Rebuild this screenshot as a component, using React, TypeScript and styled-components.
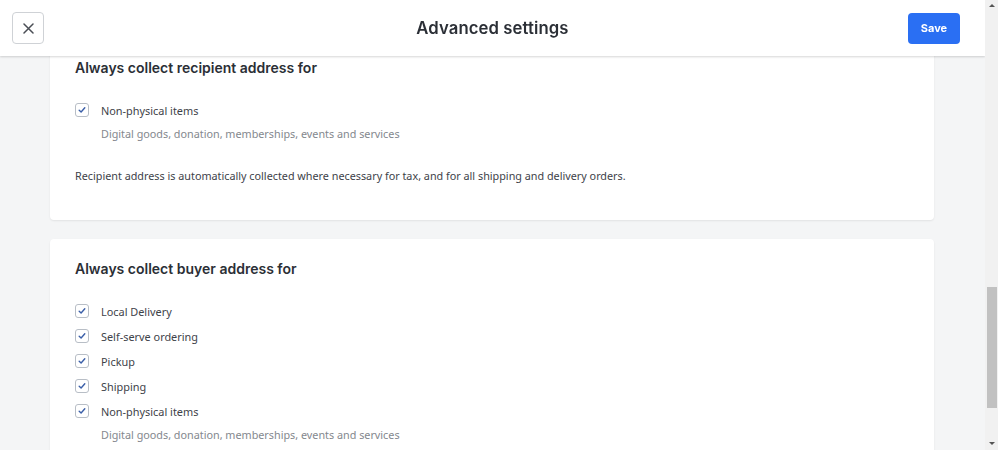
import React, { useLayoutEffect, useRef } from "react";
import styled, { createGlobalStyle } from "styled-components";

const Global = createGlobalStyle`
  html, body { margin: 0; padding: 0; height: 100%; overflow: hidden; }
  body { font-family: "Noto Sans", "Liberation Sans", Arial, sans-serif; color: #3c4047; }
  * { box-sizing: border-box; }
`;

const Frame = styled.div`
  height: 100vh;
  display: flex;
`;

const Scroller = styled.div`
  flex: 1;
  min-width: 0;
  height: 100%;
  overflow-y: scroll;
  scrollbar-width: none;
  background: #f4f5f6;
  &::-webkit-scrollbar { display: none; }
`;

const ScrollBar = styled.div`
  width: 13px;
  flex: none;
  height: 100%;
  background: #f1f1f1;
  display: flex;
  flex-direction: column;
  align-items: center;
`;

const Arrow = styled.div<{ $down?: boolean }>`
  height: 17px;
  width: 100%;
  display: flex;
  justify-content: center;
  align-items: ${(p) => (p.$down ? "flex-end" : "flex-start")};
  padding: ${(p) => (p.$down ? "0 0 5px" : "4px 0 0")};
  &::before {
    content: "";
    width: 0;
    height: 0;
    border-left: 3px solid transparent;
    border-right: 3px solid transparent;
    ${(p) => (p.$down ? "border-top: 3px solid #555;" : "border-bottom: 3px solid #555;")}
  }
`;

const Track = styled.div`
  flex: 1;
  width: 100%;
  display: flex;
  flex-direction: column;
  align-items: center;
`;

const Thumb = styled.div<{ $top: number; $h: number }>`
  margin-top: ${(p) => p.$top}px;
  height: ${(p) => p.$h}px;
  width: 10px;
  background: #c1c1c1;
`;

const Header = styled.header`
  position: sticky;
  top: 0;
  z-index: 2;
  height: 56px;
  background: #ffffff;
  box-shadow: 0 1px 2px rgba(0, 0, 0, 0.16);
  display: grid;
  grid-template-columns: 1fr auto 1fr;
  align-items: center;
  padding: 0 12px;
`;

const CloseButton = styled.button`
  width: 32px;
  height: 32px;
  border: 1px solid #cfd2d6;
  border-radius: 4px;
  background: #fff;
  display: flex;
  align-items: center;
  justify-content: center;
  padding: 0;
  justify-self: start;
  cursor: pointer;
`;

const Title = styled.h1`
  margin: 0;
  font-family: "Inter", "Noto Sans", sans-serif;
  font-size: 16.7px;
  font-weight: 600;
  color: #2b2f36;
  letter-spacing: 0.1px;
`;

const SaveButton = styled.button`
  justify-self: end;
  margin-right: 13px;
  width: 52px;
  height: 31px;
  border: none;
  border-radius: 4px;
  background: #2a6ff3;
  color: #fff;
  font-family: "Inter", "Noto Sans", sans-serif;
  font-size: 11px;
  font-weight: 700;
  cursor: pointer;
`;

const Main = styled.main`
  padding: 0 51px 64px 50px;
  display: flex;
  flex-direction: column;
  gap: 19px;
`;

const Spacer = styled.div<{ $h: number }>`
  height: ${(p) => p.$h}px;
`;

const Card = styled.section<{ $bottom: number }>`
  background: #fff;
  border-radius: 4px;
  box-shadow: 0 1px 2px rgba(0, 0, 0, 0.08);
  padding: 20px 25px ${(p) => p.$bottom}px;
`;

const CardTitle = styled.h2`
  margin: 0 0 22px;
  font-family: "Inter", "Noto Sans", sans-serif;
  font-size: 14px;
  font-weight: 600;
  line-height: 20px;
  color: #2b2f36;
`;

const OptionList = styled.div`
  display: flex;
  flex-direction: column;
  gap: 5px;
`;

const Option = styled.label`
  display: flex;
  align-items: center;
  gap: 12px;
  height: 20px;
  font-size: 10.9px;
  color: #3e4249;
`;

const Box = styled.span`
  width: 14px;
  height: 14px;
  border: 1px solid #b8bec6;
  border-radius: 3px;
  background: #fff;
  display: flex;
  align-items: center;
  justify-content: center;
  flex: none;
`;

const Hint = styled.div`
  margin: 4px 0 0 26px;
  line-height: 20px;
  font-size: 10.8px;
  color: #84888e;
`;

const Note = styled.p`
  margin: 22px 0 0;
  line-height: 20px;
  font-size: 10.8px;
  color: #3e4249;
`;

const Check = ({ label }: { label: string }) => (
  <Option>
    <Box>
      <svg width="8" height="8" viewBox="0 0 8 8" fill="none">
        <polyline points="1.2,4.2 3.1,6 6.8,1.8" stroke="#3b5fa8" strokeWidth="1.4" strokeLinecap="round" strokeLinejoin="round" />
      </svg>
    </Box>
    {label}
  </Option>
);

const hintText = "Digital goods, donation, memberships, events and services";

export default function App() {
  const scrollRef = useRef<HTMLDivElement>(null);
  const cardRef = useRef<HTMLElement>(null);

  useLayoutEffect(() => {
    const s = scrollRef.current;
    const c = cardRef.current;
    if (s && c) s.scrollTop = c.offsetTop - 38;
  }, []);

  return (
    <>
      <Global />
      <Frame>
        <Scroller ref={scrollRef}>
          <Header>
            <CloseButton aria-label="Close">
              <svg width="11" height="11" viewBox="0 0 11 11" fill="none">
                <path d="M1 1L10 10M10 1L1 10" stroke="#4a4e55" strokeWidth="1.5" strokeLinecap="round" />
              </svg>
            </CloseButton>
            <Title>Advanced settings</Title>
            <SaveButton>Save</SaveButton>
          </Header>
          <Main>
            <Spacer $h={985} />
            <Card $bottom={34} ref={cardRef}>
              <CardTitle>Always collect recipient address for</CardTitle>
              <OptionList>
                <Check label="Non-physical items" />
              </OptionList>
              <Hint>{hintText}</Hint>
              <Note>
                Recipient address is automatically collected where necessary for tax, and for all shipping and delivery orders.
              </Note>
            </Card>
            <Card $bottom={34}>
              <CardTitle>Always collect buyer address for</CardTitle>
              <OptionList>
                <Check label="Local Delivery" />
                <Check label="Self-serve ordering" />
                <Check label="Pickup" />
                <Check label="Shipping" />
                <Check label="Non-physical items" />
              </OptionList>
              <Hint>{hintText}</Hint>
            </Card>
          </Main>
        </Scroller>
        <ScrollBar aria-hidden="true">
          <Arrow />
          <Track>
            <Thumb $top={270} $h={121} />
          </Track>
          <Arrow $down />
        </ScrollBar>
      </Frame>
    </>
  );
}
